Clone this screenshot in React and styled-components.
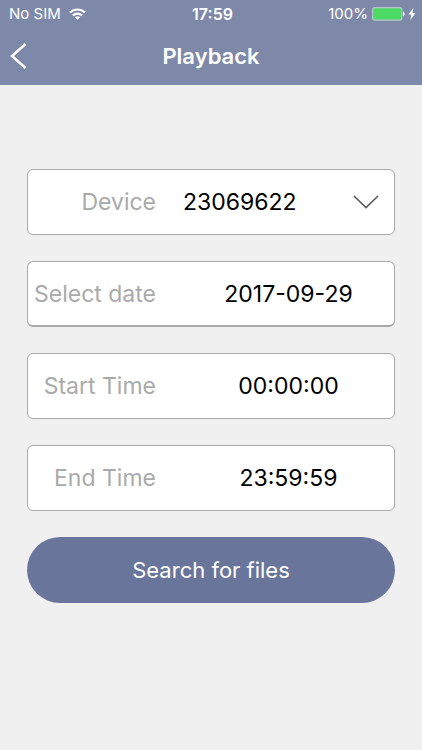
import React, { useState } from 'react'
import styled, { createGlobalStyle } from 'styled-components';

const Playback = () => {

    const [device, setDevice] = useState('23069622');
    const [date, setDate] = useState('2017-09-29');
    const [startTime, setStartTime] = useState('00:00:00');
    const [endTime, setEndTime] = useState('23:59:59');

    const onSubmit = (e) => {
        e.preventDefault();
    }

    return (
        <Page>
            <GlobalStyle />
            <Header>
                <StatusBar>
                    <StatusSide>
                        <span>No SIM</span>
                        <WifiIcon />
                    </StatusSide>
                    <Clock>17:59</Clock>
                    <StatusSide $end>
                        <span>100%</span>
                        <BatteryIcon />
                    </StatusSide>
                </StatusBar>
                <NavBar>
                    <BackButton type="button" aria-label="Back">
                        <svg width="18" height="28" viewBox="0 0 18 28" fill="none" stroke="#fff" strokeWidth="2.4">
                            <path d="M15.5 2 L2 14 L15.5 26" />
                        </svg>
                    </BackButton>
                    <Title>Playback</Title>
                </NavBar>
            </Header>

            <Form onSubmit={onSubmit}>
                <Field>
                    <Label htmlFor="device">Device</Label>
                    <Select id="device" value={device} onChange={(e) => setDevice(e.target.value)}>
                        <option value="23069622">23069622</option>
                    </Select>
                    <Arrow width="26" height="14" viewBox="0 0 26 14" fill="none" stroke="#5c5c5c" strokeWidth="1.6">
                        <path d="M1 1 L13 12.6 L25 1" />
                    </Arrow>
                </Field>
                <Field $raised>
                    <Label htmlFor="date">Select date</Label>
                    <Input id="date" type="text" value={date} onChange={(e) => setDate(e.target.value)} />
                </Field>
                <Field>
                    <Label htmlFor="start">Start Time</Label>
                    <Input id="start" type="text" value={startTime} onChange={(e) => setStartTime(e.target.value)} />
                </Field>
                <Field>
                    <Label htmlFor="end">End Time</Label>
                    <Input id="end" type="text" value={endTime} onChange={(e) => setEndTime(e.target.value)} />
                </Field>
                <SearchButton type="submit">Search for files</SearchButton>
            </Form>
        </Page>
    );
}

export default Playback;

const WifiIcon = () => (
    <svg width="17" height="12" viewBox="0 0 17 12" fill="none" stroke="#fff" strokeWidth="2.1">
        <path d="M1 4.6 C5.2 0.4 11.8 0.4 16 4.6" />
        <path d="M3.9 7.4 C6.5 5 10.5 5 13.1 7.4" />
        <path d="M8.5 11.8 L5.9 9.3 C7.3 8 9.7 8 11.1 9.3 Z" fill="#fff" stroke="none" />
    </svg>
);

const BatteryIcon = () => (
    <svg width="44" height="14" viewBox="0 0 44 14">
        <rect x="0.6" y="0.6" width="29.2" height="12.6" rx="2" fill="#4cd964" stroke="#b5c6cf" strokeWidth="1.2" />
        <path d="M31 4.6 C33 5 33 9 31 9.4 Z" fill="#fff" />
        <path d="M41.4 1 L36.4 7.6 H39.4 L38.2 13 L43.6 6 H40.4 Z" fill="#fff" />
    </svg>
);

const GlobalStyle = createGlobalStyle`
    * {
        box-sizing: border-box;
    }
    body {
        margin: 0;
        background: #f0f0f0;
        font-family: Inter, "Liberation Sans", sans-serif;
    }
    button, input, select {
        font-family: inherit;
    }
`

const Page = styled.div`
    min-height: 100vh;
    background: #f0f0f0;
`

const Header = styled.header`
    height: 85px;
    background: #7e89a9;
    color: #fff;
`

const StatusBar = styled.div`
    display: grid;
    grid-template-columns: 1fr auto 1fr;
    align-items: center;
    height: 28px;
    padding: 0 6px 0 9px;
    font-size: 15px;
    line-height: 20px;
`

const StatusSide = styled.div`
    display: flex;
    align-items: center;
    justify-content: ${({ $end }) => ($end ? 'flex-end' : 'flex-start')};
    gap: ${({ $end }) => ($end ? '4px' : '8px')};
`

const Clock = styled.span`
    font-size: 16px;
    font-weight: 600;
`

const NavBar = styled.div`
    display: grid;
    grid-template-columns: 60px 1fr 60px;
    align-items: center;
    height: 56px;
`

const BackButton = styled.button`
    display: flex;
    padding: 0 0 0 10px;
    border: 0;
    background: none;
    cursor: pointer;
`

const Title = styled.h1`
    margin: 0;
    font-size: 22px;
    font-weight: 600;
    line-height: 28px;
    text-align: center;
`

const Form = styled.form`
    display: flex;
    flex-direction: column;
    gap: 26px;
    padding: 84px 27px 40px;
`

const Field = styled.div`
    display: flex;
    align-items: center;
    height: 66px;
    border: 1px solid #a9a9a9;
    border-bottom-width: ${({ $raised }) => ($raised ? '2px' : '1px')};
    border-radius: 6px;
    background: #fff;
`

const Label = styled.label`
    flex: none;
    width: 128px;
    color: #aaa;
    font-size: 23px;
    line-height: 28px;
    text-align: right;
    white-space: nowrap;
`

const Input = styled.input`
    flex: 1;
    min-width: 0;
    height: 100%;
    margin-left: 27px;
    padding: 0;
    border: 0;
    outline: 0;
    background: none;
    color: #000;
    font-size: 23px;
    text-align: center;
`

const Select = styled.select`
    flex: 1;
    min-width: 0;
    height: 100%;
    margin-left: 27px;
    padding: 0;
    border: 0;
    outline: 0;
    appearance: none;
    background: none;
    color: #000;
    font-size: 23px;
`

const Arrow = styled.svg`
    flex: none;
    margin-right: 15px;
    pointer-events: none;
`

const SearchButton = styled.button`
    height: 66px;
    border: 0;
    border-radius: 33px;
    background: #69759b;
    color: #fff;
    font-size: 22px;
    cursor: pointer;
`
